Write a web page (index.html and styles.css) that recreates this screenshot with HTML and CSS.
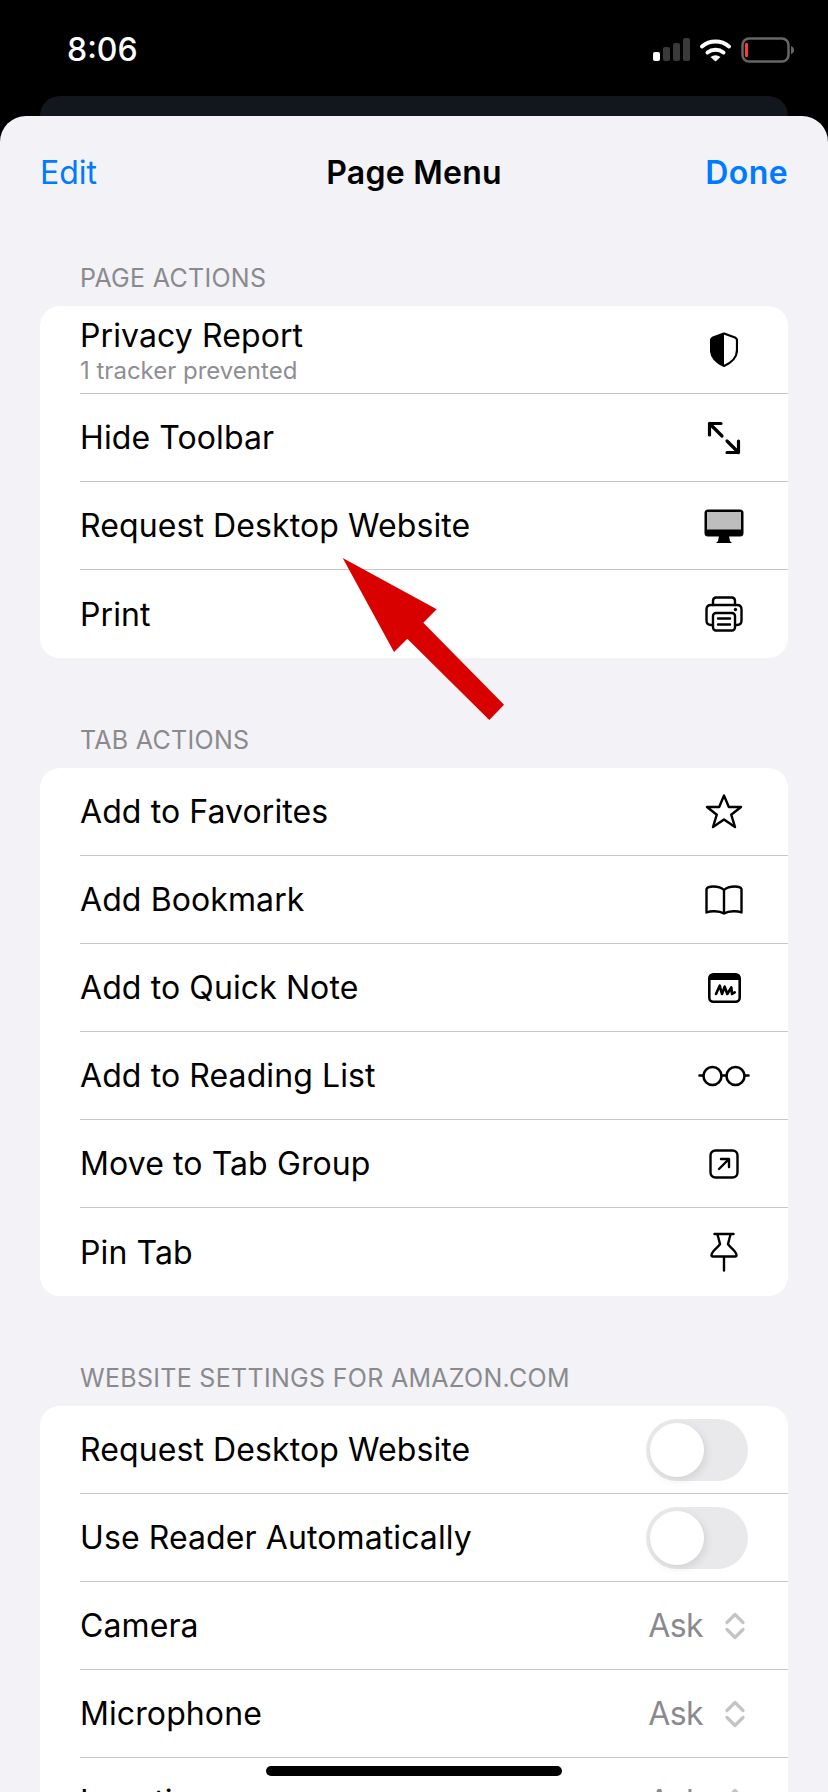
FILE: index.html
```html
<!DOCTYPE html>
<html lang="en">
<head>
<meta charset="utf-8">
<title>Page Menu</title>
<link rel="stylesheet" href="styles.css">
</head>
<body>
<div class="screen">
  <header class="status">
    <span class="time">8:06</span>
    <svg class="status-icons" width="142" height="26" viewBox="0 0 142 26">
      <rect x="1" y="15" width="7" height="9" rx="2" fill="#fff"/>
      <rect x="11" y="10" width="7" height="14" rx="2" fill="#3a3a3a"/>
      <rect x="21" y="6" width="7" height="18" rx="2" fill="#3a3a3a"/>
      <rect x="31" y="1" width="7" height="23" rx="2" fill="#3a3a3a"/>
      <path d="M50 9.500a21 21 0 0 1 27 0" fill="none" stroke="#fff" stroke-width="4" stroke-linecap="round"/>
      <path d="M55.500 15.500a13 13 0 0 1 16 0" fill="none" stroke="#fff" stroke-width="4" stroke-linecap="round"/>
      <path d="M58.500 20q5-3.500 10 0l-5 4.500z" fill="#fff"/>
      <rect x="90.500" y="1.500" width="46" height="23" rx="6.500" fill="none" stroke="#666" stroke-width="2.500"/>
      <rect x="93" y="6" width="3" height="14" rx="1" fill="#ff3b30"/>
      <path d="M139 9q3 1 3 4t-3 4z" fill="#666"/>
    </svg>
  </header>
  <div class="backdrop"></div>
  <main class="sheet">
    <nav class="navbar">
      <span class="nav-link">Edit</span>
      <span class="nav-title">Page Menu</span>
      <span class="nav-link nav-done">Done</span>
    </nav>

    <h2 class="section-label first">PAGE ACTIONS</h2>
    <ul class="group">
      <li class="row">
        <div class="row-text"><span class="row-title tight">Privacy Report</span><span class="row-sub">1 tracker prevented</span></div>
        <span class="icon-slot"><svg width="28" height="35" viewBox="0 0 28 35"><path d="M14 1.500 3 5.500Q1 6.300 1 8.500V18c0 8 6 13 13 16 7-3 13-8 13-16V8.500q0-2.200-2-3z" fill="#fff" stroke="#000" stroke-width="2.200" stroke-linejoin="round"/><path d="M14 1.500 3 5.500Q1 6.300 1 8.500V18c0 8 6 13 13 16z" fill="#000"/></svg></span>
      </li>
      <li class="row">
        <span class="row-title">Hide Toolbar</span>
        <span class="icon-slot"><svg width="34" height="34" viewBox="0 0 34 34" fill="none" stroke="#000" stroke-width="3.200" stroke-linecap="round" stroke-linejoin="round"><path d="M2.500 14V2.500H14M2.500 2.500 15 15M20 20 31.500 31.500M31.500 20v11.500H20"/></svg></span>
      </li>
      <li class="row">
        <span class="row-title">Request Desktop Website</span>
        <span class="icon-slot"><svg width="40" height="34" viewBox="0 0 40 34"><rect x="0.500" y="0.500" width="39" height="27" rx="3.500" fill="#000"/><rect x="3" y="3" width="34" height="17.500" fill="#bdbdbd"/><path d="M15 27h10l1 5 2 2H12l2-2z" fill="#000"/></svg></span>
      </li>
      <li class="row last">
        <span class="row-title">Print</span>
        <span class="icon-slot"><svg width="38" height="36" viewBox="0 0 38 36" fill="none" stroke="#000" stroke-width="2.400" stroke-linejoin="round" stroke-linecap="round"><path d="M8 9V5q0-3.500 3.500-3.500h15Q30 1.500 30 5v4"/><path d="M8 29H6q-4.500 0-4.500-4.500v-11Q1.500 9 6 9h26q4.500 0 4.500 4.500v11Q36.500 29 32 29h-2"/><rect x="8" y="17" width="22" height="17.500" rx="3" fill="#fff"/><path d="M13 22.500h12M13 28.500h12"/><circle cx="30.500" cy="13.500" r="1.700" fill="#000" stroke="none"/></svg></span>
      </li>
    </ul>

    <h2 class="section-label">TAB ACTIONS</h2>
    <ul class="group">
      <li class="row">
        <span class="row-title">Add to Favorites</span>
        <span class="icon-slot"><svg width="38" height="37" viewBox="0 0 38 37"><path d="M19 2.500 23.800 14H36l-9.800 7.700L30 34 19 26.500 8 34l3.800-12.300L2 14h12.200z" fill="none" stroke="#000" stroke-width="2.400" stroke-linejoin="round"/></svg></span>
      </li>
      <li class="row">
        <span class="row-title">Add Bookmark</span>
        <span class="icon-slot"><svg width="38" height="30" viewBox="0 0 38 30" fill="none" stroke="#000" stroke-width="2.400" stroke-linejoin="round" stroke-linecap="round"><path d="M19 5C16 2 12 1.500 8 1.500 5 1.500 2.500 2 1.500 4v23.500C5 26 14 25.500 19 28.500c5-3 14-2.500 17.500-1V4c-1-2-3.500-2.500-6.500-2.500-4 0-8 .5-11 3.500zM19 5v23"/></svg></span>
      </li>
      <li class="row">
        <span class="row-title">Add to Quick Note</span>
        <span class="icon-slot"><svg width="33" height="30" viewBox="0 0 33 30"><rect x="1.300" y="1.300" width="30.400" height="27.400" rx="4" fill="#fff" stroke="#000" stroke-width="2.600"/><path d="M1 5.500Q1 1 5.500 1h22Q32 1 32 5.500V7H1z" fill="#000"/><path d="M8 21 11.700 12.700 14 21 16.700 13.700 19.300 21 23.300 14.300 24 21 26.700 19.300" fill="none" stroke="#000" stroke-width="2.600" stroke-linecap="round" stroke-linejoin="round"/></svg></span>
      </li>
      <li class="row">
        <span class="row-title">Add to Reading List</span>
        <span class="icon-slot"><svg width="52" height="22" viewBox="0 0 52 22" fill="none" stroke="#000" stroke-width="2.600" stroke-linecap="round"><circle cx="14.500" cy="11" r="9"/><circle cx="37.500" cy="11" r="9"/><path d="M1.500 10.500h3.500M23.500 10.500h5M47 10.500h3.500"/></svg></span>
      </li>
      <li class="row">
        <span class="row-title">Move to Tab Group</span>
        <span class="icon-slot"><svg width="30" height="30" viewBox="0 0 30 30" fill="none" stroke="#000" stroke-width="2.400" stroke-linecap="round" stroke-linejoin="round"><rect x="1.500" y="1.500" width="27" height="27" rx="5"/><path d="M10 20 20 10M12 10h8v8"/></svg></span>
      </li>
      <li class="row last">
        <span class="row-title">Pin Tab</span>
        <span class="icon-slot"><svg width="28" height="40" viewBox="0 0 28 40" fill="none" stroke="#000" stroke-width="2.400" stroke-linecap="round" stroke-linejoin="round"><path d="M4.500 2h19M7.500 2.500 10 12C9 15 2 18 1.500 23q0 1.500 1.500 1.500h22q1.500 0 1.500-1.500C26 18 19 15 18 12l2.500-9.500M14 24.500v14"/></svg></span>
      </li>
    </ul>

    <h2 class="section-label">WEBSITE SETTINGS FOR AMAZON.COM</h2>
    <ul class="group">
      <li class="row">
        <span class="row-title">Request Desktop Website</span>
        <span class="toggle"><span class="knob"></span></span>
      </li>
      <li class="row">
        <span class="row-title">Use Reader Automatically</span>
        <span class="toggle"><span class="knob"></span></span>
      </li>
      <li class="row select">
        <span class="row-title">Camera</span>
        <span class="value">Ask<svg class="chev" width="20" height="28" viewBox="0 0 20 28" fill="none" stroke="#c4c4c7" stroke-width="3.200" stroke-linecap="round" stroke-linejoin="round"><path d="M2 10.500 10 2.500l8 8M2 17.500l8 8 8-8"/></svg></span>
      </li>
      <li class="row select">
        <span class="row-title">Microphone</span>
        <span class="value">Ask<svg class="chev" width="20" height="28" viewBox="0 0 20 28" fill="none" stroke="#c4c4c7" stroke-width="3.200" stroke-linecap="round" stroke-linejoin="round"><path d="M2 10.500 10 2.500l8 8M2 17.500l8 8 8-8"/></svg></span>
      </li>
      <li class="row select">
        <span class="row-title">Location</span>
        <span class="value">Ask<svg class="chev" width="20" height="28" viewBox="0 0 20 28" fill="none" stroke="#c4c4c7" stroke-width="3.200" stroke-linecap="round" stroke-linejoin="round"><path d="M2 10.500 10 2.500l8 8M2 17.500l8 8 8-8"/></svg></span>
      </li>
    </ul>
  </main>
  <svg class="annotation" width="828" height="1792" viewBox="0 0 828 1792"><polygon points="342.700,558 436.700,609.300 423.300,622.700 504,704.700 489.300,720 407.300,638.700 394,652" fill="#d90000"/></svg>
  <div class="home-bar"></div>
</div>
</body>
</html>
```
FILE: styles.css
```css
* { box-sizing: border-box; }
html, body { margin: 0; padding: 0; background: #000; }
.screen {
  position: relative;
  width: 828px;
  height: 1792px;
  overflow: hidden;
  background: #000;
  font-family: "Inter", "Liberation Sans", sans-serif;
  color: #000;
}
.status {
  height: 96px;
  display: flex;
  justify-content: space-between;
  align-items: flex-start;
  padding: 30px 34px 0 67px;
}
.time { color: #fff; font-size: 32px; line-height: 40px; font-weight: 500; }
.status-icons { margin-top: 7px; }
.backdrop {
  height: 40px;
  margin: 0 40px;
  background: #12171e;
  border-radius: 20px 20px 0 0;
}
.sheet {
  margin-top: -20px;
  min-height: 1676px;
  background: #f2f2f7;
  border-radius: 26px 26px 0 0;
  padding: 0 40px;
}
.navbar {
  height: 112px;
  display: grid;
  grid-template-columns: 1fr auto 1fr;
  align-items: center;
  font-size: 32px;
}
.nav-link { color: #007aff; }
.nav-done { font-weight: 600; justify-self: end; letter-spacing: .4px; }
.nav-title { font-weight: 600; letter-spacing: .25px; }
.section-label {
  margin: 67px 0 0;
  padding: 0 40px;
  height: 30px;
  font-size: 25px;
  line-height: 30px;
  letter-spacing: .3px;
  font-weight: 400;
  color: #8a8a8e;
}
.section-label.first { margin-top: 35px; }
.group {
  list-style: none;
  margin: 13px 0 0;
  padding: 0;
  background: #fff;
  border-radius: 20px;
  overflow: hidden;
}
.row {
  height: 88px;
  margin-left: 40px;
  padding-right: 40px;
  display: flex;
  justify-content: space-between;
  align-items: center;
  border-bottom: 1px solid #c6c6c8;
}
.row.last { border-bottom: 0; }
.row.select { padding-right: 43px; }
.row-text { display: flex; flex-direction: column; padding-top: 3px; }
.row-title { font-size: 32px; line-height: 40px; padding-top: 1px; letter-spacing: .1px; }
.row-title.tight { line-height: 36px; }
.row-sub { font-size: 24px; line-height: 28px; margin-top: 3px; color: #8e8e93; }
.icon-slot {
  width: 0;
  display: flex;
  justify-content: center;
  margin-right: 24px;
}
.icon-slot svg { flex: none; }
.toggle {
  width: 102px;
  height: 62px;
  border-radius: 31px;
  background: #e9e9eb;
  padding: 4px;
  display: flex;
}
.knob {
  width: 54px;
  height: 54px;
  border-radius: 50%;
  background: #fff;
  box-shadow: 2px 3px 8px rgba(0,0,0,.1);
}
.value {
  display: flex;
  align-items: center;
  gap: 22px;
  font-size: 32px;
  letter-spacing: -.6px;
  color: #8a8a8e;
}
.annotation { position: absolute; left: 0; top: 0; pointer-events: none; }
.home-bar {
  position: absolute;
  left: 266px;
  top: 1766px;
  width: 296px;
  height: 10px;
  border-radius: 5px;
  background: #000;
}
```
